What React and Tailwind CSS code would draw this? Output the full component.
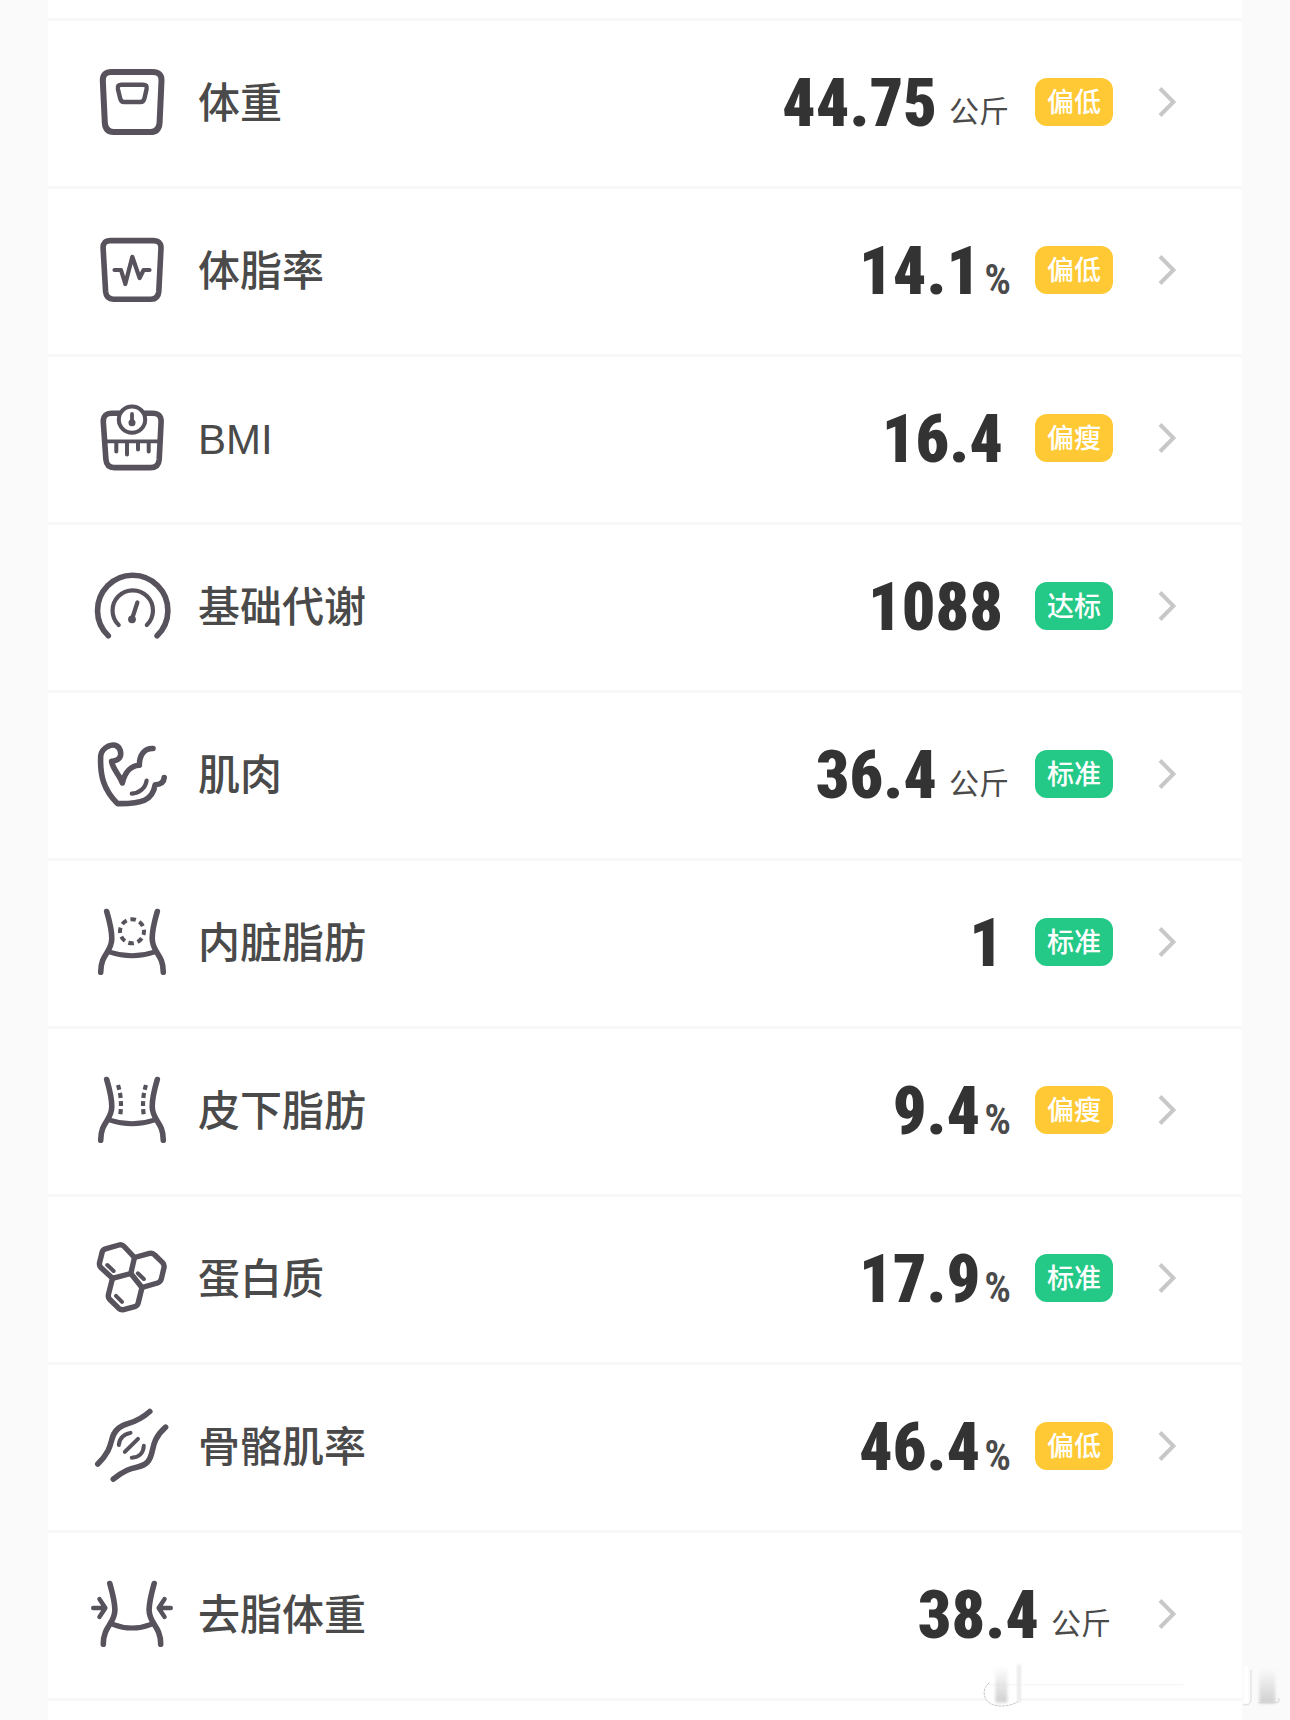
import React from "react";

const IconFrame = ({ children }) => (
  <svg
    viewBox="0 0 84 84"
    className="w-[84px] h-[84px] shrink-0 text-[#57525c]"
    fill="none"
    stroke="currentColor"
    strokeWidth="5.6"
    strokeLinecap="round"
    strokeLinejoin="round"
    aria-hidden="true"
  >
    {children}
  </svg>
);

const WeightIcon = () => (
  <IconFrame>
    <path
      strokeWidth="6"
      d="M21.5 12H62.5Q71.8 12 71.5 20.5L69.6 62.5Q69 72 60.5 72H23.5Q15.4 72 14.8 62.5L12.8 20.5Q12.6 12 21.5 12Z"
    />
    <path
      strokeWidth="4.4"
      d="M31.5 24.7H53Q57.6 24.7 56.6 29L54.4 38.5Q53.6 42 50.5 42H34Q31 42 30.2 38.5L27.9 29Q27 24.7 31.5 24.7Z"
    />
  </IconFrame>
);

const BodyFatIcon = () => (
  <IconFrame>
    <path d="M20.5 12.6H63Q71.2 12.6 71 20L68.8 63.5Q68.2 71.2 61 71.2H23.5Q16.3 71.2 15.6 63.5L13.1 20Q12.8 12.6 20.5 12.6Z" />
    <path strokeWidth="4.2" d="M24.5 42H31L35.3 56L42.3 28.8L49.6 50L53.6 42H59.5" />
  </IconFrame>
);

const BmiIcon = () => (
  <IconFrame>
    <path d="M22 17.2H62.5Q71.5 17.2 71.1 26L69.2 63.5Q68.6 71.6 60.5 71.6H24.5Q16.6 71.6 15.9 63.5L13.3 26Q13 17.2 22 17.2Z" />
    <path strokeWidth="3.8" strokeLinecap="butt" d="M16 45.3H69" />
    <path strokeWidth="4" d="M26.3 46V55.5M37 46V58.5M48 46V53.5M58.7 46V55.5" />
    <circle cx="42" cy="23.6" r="13.2" fill="#fff" strokeWidth="4" />
    <path strokeWidth="3.8" d="M42 18V26" />
    <circle cx="42" cy="26.8" r="3.5" fill="currentColor" stroke="none" />
  </IconFrame>
);

const MetabolismIcon = () => (
  <IconFrame>
    <path d="M18.3 71.8A35.2 35.2 0 1 1 67.1 71.8" />
    <path strokeWidth="4.2" d="M28.7 61A20.2 20.2 0 1 1 56.8 61" />
    <path strokeWidth="4.2" d="M47.4 38.5L42 55" />
    <circle cx="42" cy="55.3" r="3.9" fill="currentColor" stroke="none" />
  </IconFrame>
);

const MuscleIcon = () => (
  <IconFrame>
    <path d="M63 16.5C54.5 16.2 49.5 22.5 49.3 33.2C41.5 33.5 35 39.5 32.3 51C30 43.5 22.5 37 21.6 29.2C29.5 28.6 31.8 24.5 30.3 18.8C28.5 12 22.5 12.2 17.8 14.4C14 16.5 11.2 19 10.7 23.8C9.8 43.5 13.5 57.5 27.5 71.6C52 72 62.5 68.5 65.2 52.8C70.5 52.4 74 50 74.2 45.5" />
    <path strokeWidth="4.2" d="M41.8 61.6C49 61.3 55.3 56.5 56.6 48.6" />
  </IconFrame>
);

const Waist = () => (
  <>
    <path d="M16.7 11.5C19.5 21 21.9 30 21.8 38.5C21.7 53 10.7 53.5 10.7 72.2" />
    <path d="M67.3 11.5C64.5 21 62.1 30 62.2 38.5C62.3 53 73.3 53.5 73.3 72.2" />
    <path strokeWidth="5" d="M19.5 52Q42 59.5 64.5 52" />
  </>
);

const VisceralFatIcon = () => (
  <IconFrame>
    <Waist />
    <circle
      cx="42"
      cy="31.3"
      r="12"
      strokeWidth="4"
      strokeLinecap="butt"
      strokeDasharray="5.6 3.824"
      strokeDashoffset="2"
    />
  </IconFrame>
);

const SubcutaneousFatIcon = () => (
  <IconFrame>
    <Waist />
    <g strokeWidth="4.2" strokeLinecap="butt" strokeDasharray="5 3.2">
      <path d="M28 17Q32.5 31.5 30.2 47.5" />
      <path d="M56 17Q51.5 31.5 53.8 47.5" />
    </g>
  </IconFrame>
);

const ProteinIcon = () => (
  <IconFrame>
    <g strokeWidth="5.4">
      <path d="M15.5 12.8L29 9Q32 8.2 34.2 10.5L44.5 21.5L40.8 37.5L22.5 42.3L10.8 31.5Q9 29.5 9.5 27L12.2 16Q12.8 13.6 15.5 12.8Z" />
      <path d="M44.5 21.5L59.5 17.4Q62.5 16.6 64.8 19L72.6 26.6Q74.6 28.8 74 31.6L71.3 43Q70.4 46 67.5 47L52 51.5L40.8 37.5" />
      <path d="M22.5 42.3L18.4 58.6Q17.8 61.3 19.8 63.5L28.6 72.2Q30.8 74.2 33.6 73.6L44.8 70.7Q47.6 69.8 48.2 67L52 51.5" />
    </g>
    <path strokeWidth="4" d="M17.3 29L23.6 35M47.8 37.3L53.8 43M26 59.8L32 65.8" />
  </IconFrame>
);

const SkeletalMuscleIcon = () => (
  <IconFrame>
    <path d="M59.8 7.5C44 21.5 37 17.5 28.8 24C17.5 33 26.5 41.5 7.8 60" />
    <path d="M75.6 23.2C58.5 38.5 65.5 49 57.5 58C49.5 66.5 42.5 59 23.3 75.2" />
    <path
      strokeWidth="4"
      d="M40.5 28.9C33 30.5 29.3 34.5 28.8 41M48 34.8L34.8 47.8M53.8 41.8C53.6 49 49 53.3 41.8 53.7"
    />
  </IconFrame>
);

const LeanMassIcon = () => (
  <IconFrame>
    <path d="M19.8 11.5C22.3 20.5 24.9 29.5 24.9 38C24.8 52 13.3 54 13.3 72.2" />
    <path d="M64.2 11.5C61.7 20.5 59.1 29.5 59.1 38C59.2 52 70.7 54 70.7 72.2" />
    <path strokeWidth="5" d="M23 52.4Q42 59.8 61 52.4" />
    <g strokeWidth="4.4">
      <path d="M3.2 36H15M9.4 27L15.4 36L9.4 45" />
      <path d="M80.8 36H69M74.6 27L68.6 36L74.6 45" />
    </g>
  </IconFrame>
);

const Chevron = () => (
  <svg
    viewBox="0 0 18 32"
    className="w-[18px] h-8 shrink-0 text-[#c8c8c8]"
    fill="none"
    stroke="currentColor"
    strokeWidth="4"
    aria-hidden="true"
  >
    <path d="M2 2.5L15.5 16L2 29.5" />
  </svg>
);

const metrics = [
  { label: "体重", value: "44.75", unit: "公斤", status: "偏低", level: "low", Icon: WeightIcon },
  { label: "体脂率", value: "14.1", unit: "%", status: "偏低", level: "low", Icon: BodyFatIcon },
  { label: "BMI", value: "16.4", status: "偏瘦", level: "low", Icon: BmiIcon },
  { label: "基础代谢", value: "1088", status: "达标", level: "normal", Icon: MetabolismIcon },
  { label: "肌肉", value: "36.4", unit: "公斤", status: "标准", level: "normal", Icon: MuscleIcon },
  { label: "内脏脂肪", value: "1", status: "标准", level: "normal", Icon: VisceralFatIcon },
  { label: "皮下脂肪", value: "9.4", unit: "%", status: "偏瘦", level: "low", Icon: SubcutaneousFatIcon },
  { label: "蛋白质", value: "17.9", unit: "%", status: "标准", level: "normal", Icon: ProteinIcon },
  { label: "骨骼肌率", value: "46.4", unit: "%", status: "偏低", level: "low", Icon: SkeletalMuscleIcon },
  { label: "去脂体重", value: "38.4", unit: "公斤", Icon: LeanMassIcon },
];

const levelColors = {
  low: "bg-[#fec934]",
  normal: "bg-[#25c987]",
};

const Unit = ({ unit }) => {
  if (!unit) {
    return <span className="w-2" />;
  }
  if (unit === "%") {
    return (
      <span className="ml-1 font-['Roboto_Condensed',Roboto,sans-serif] text-[42px] leading-[52px] font-semibold text-[#4a4a4a]">
        %
      </span>
    );
  }
  return (
    <span className="ml-3 pr-0.5 text-[30px] leading-[52px] text-[#4a4a4a]">{unit}</span>
  );
};

const MetricRow = ({ metric }) => {
  const { label, value, unit, status, level, Icon } = metric;

  return (
    <li className="border-b-3 border-[#f8f8f8]">
      <button
        type="button"
        className="flex items-center w-full h-[165px] pl-[42px] pr-[66px] pb-1 text-left"
      >
        <Icon />
        <span className="ml-6 pt-1 text-[42px] leading-none font-medium text-[#4a4a4a]">
          {label}
        </span>
        <span className="ml-auto pt-1 flex items-end">
          <span className="font-['Roboto_Condensed',Roboto,sans-serif] text-[66px] leading-[68px] font-black text-[#333333]">
            {value}
          </span>
          <Unit unit={unit} />
        </span>
        {status && (
          <span
            className={`ml-6 flex items-center justify-center w-[78px] h-12 pt-1 rounded-xl text-[27px] leading-none font-medium text-white ${levelColors[level]}`}
          >
            {status}
          </span>
        )}
        <span className="ml-[45px]">
          <Chevron />
        </span>
      </button>
    </li>
  );
};

const Watermark = () => (
  <svg
    viewBox="0 0 960 210"
    className="absolute right-0 bottom-0 w-80 h-[70px] pointer-events-none"
    fill="none"
    aria-hidden="true"
  >
    <defs>
      <linearGradient id="streak" x1="0" y1="0" x2="0" y2="1">
        <stop offset="0" stopColor="#d0d0d0" stopOpacity="0" />
        <stop offset="1" stopColor="#cfcfcf" />
      </linearGradient>
      <filter id="soften" x="-20%" y="-20%" width="140%" height="140%">
        <feGaussianBlur stdDeviation="4" />
      </filter>
    </defs>
    <path d="M50 104H640" stroke="#f8f8f8" strokeWidth="5" />
    <path d="M44 104C36 140 56 167 95 168C120 168 142 162 145 154V110H60Z" fill="#fff" />
    <rect x="76" y="48" width="36" height="110" fill="url(#streak)" filter="url(#soften)" />
    <rect x="142" y="44" width="10" height="112" fill="#e6e6e6" filter="url(#soften)" />
    <path
      d="M58 98C36 116 38 146 60 160C86 174 128 168 144 154"
      stroke="#c4c4c4"
      strokeWidth="3"
      strokeDasharray="8 3"
    />
    <path d="M828 50V160" stroke="#fff" strokeWidth="14" />
    <path d="M820 164Q842 168 843 150V60" stroke="#dadada" strokeWidth="3" />
    <rect x="868" y="56" width="48" height="104" fill="url(#streak)" filter="url(#soften)" />
    <path d="M866 158H920Q930 156 926 144" stroke="#d2d2d2" strokeWidth="3" />
  </svg>
);

export default function App() {
  return (
    <main className="relative bg-[#fafafa] px-12 font-['Liberation_Sans','Noto_Sans_CJK_SC',sans-serif]">
      <ul className="bg-white">
        <li className="h-[21px] border-b-3 border-[#f8f8f8]" aria-hidden="true" />
        {metrics.map((metric) => (
          <MetricRow key={metric.label} metric={metric} />
        ))}
        <li className="h-[19px]" aria-hidden="true" />
      </ul>
      <Watermark />
    </main>
  );
}
